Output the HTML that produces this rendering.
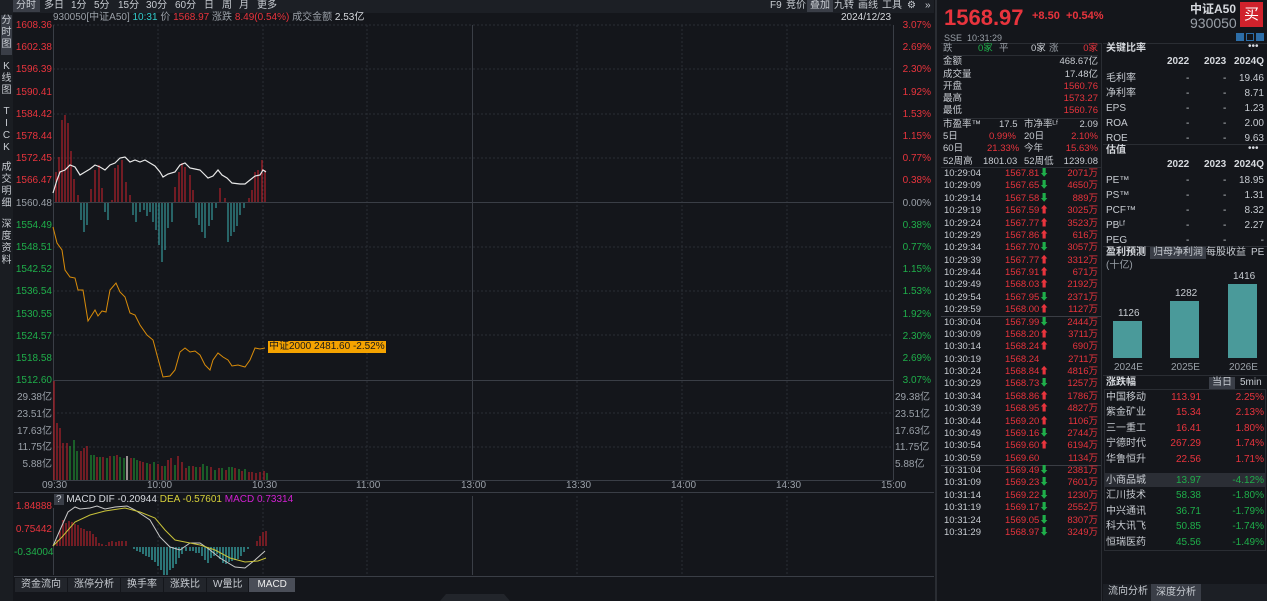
<!DOCTYPE html>
<html><head><meta charset="utf-8"><style>
*{margin:0;padding:0;box-sizing:border-box}
body{width:1267px;height:601px;background:#14161b;color:#c8ccd2;font-family:"Liberation Sans","Noto Sans CJK SC",sans-serif;font-size:10px;position:relative;overflow:hidden}
.a{position:absolute;white-space:nowrap;line-height:12px}
.r{color:#e8343d}.g{color:#1fae4a}.w{color:#d6d9de}.gr{color:#9aa0a8}
.tab{position:absolute;top:0;height:12px;line-height:12px;font-size:10px;color:#c8ccd2;padding:0 3px}
.rt{text-align:right}
</style></head><body>
<!-- top bar -->
<div class="a" style="left:0;top:0;width:934px;height:13px;background:#1c1f25"></div>
<div class="tab" style="left:13px;background:#3a3e47;width:27px">分时</div>
<div class="tab" style="left:41px">多日</div><div class="tab" style="left:68px">1分</div><div class="tab" style="left:91px">5分</div><div class="tab" style="left:115px">15分</div><div class="tab" style="left:143px">30分</div><div class="tab" style="left:172px">60分</div><div class="tab" style="left:201px">日</div><div class="tab" style="left:219px">周</div><div class="tab" style="left:236px">月</div><div class="tab" style="left:254px">更多</div>
<div class="tab" style="left:767px">F9</div><div class="tab" style="left:783px">竞价</div><div class="tab" style="left:807px;background:#3a3e47">叠加</div><div class="tab" style="left:831px">九转</div><div class="tab" style="left:855px">画线</div><div class="tab" style="left:879px">工具</div><div class="tab" style="left:904px">⚙</div><div class="tab" style="left:922px">»</div>
<!-- left sidebar -->
<div class="a" style="left:0;top:13px;width:13px;height:588px;background:#1a1d22"></div>
<div class="a" style="left:1px;top:15px;width:11px;height:40px;background:#3a3e47;line-height:12px;text-align:center;white-space:normal">分<br>时<br>图</div>
<div class="a" style="left:1px;top:61px;width:11px;text-align:center;white-space:normal">K<br>线<br>图</div>
<div class="a" style="left:1px;top:106px;width:11px;text-align:center;white-space:normal">T<br>I<br>C<br>K</div>
<div class="a" style="left:1px;top:162px;width:11px;text-align:center;white-space:normal">成<br>交<br>明<br>细</div>
<div class="a" style="left:1px;top:219px;width:11px;text-align:center;white-space:normal">深<br>度<br>资<br>料</div>
<!-- header line -->
<div class="a" style="left:53px;top:12px;font-size:10px"><span class="gr">930050[中证A50]</span> <span style="color:#3cc">10:31</span> <span class="gr">价</span> <span class="r">1568.97</span> <span class="gr">涨跌</span> <span class="r">8.49(0.54%)</span> <span class="gr">成交金额</span> <span class="w">2.53亿</span></div>
<div class="a w" style="left:841px;top:12px">2024/12/23</div>
<svg class="a" style="left:0;top:0" width="935" height="601">
<g stroke="#2a2e35" stroke-dasharray="2,2" stroke-width="1">
<line x1="53" y1="25" x2="893" y2="25"/><line x1="53" y1="69" x2="893" y2="69"/><line x1="53" y1="114" x2="893" y2="114"/><line x1="53" y1="158" x2="893" y2="158"/><line x1="53" y1="247" x2="893" y2="247"/><line x1="53" y1="291" x2="893" y2="291"/><line x1="53" y1="335" x2="893" y2="335"/>
<line x1="158" y1="25" x2="158" y2="480"/><line x1="263" y1="25" x2="263" y2="480"/><line x1="367" y1="25" x2="367" y2="480"/><line x1="577" y1="25" x2="577" y2="480"/><line x1="682" y1="25" x2="682" y2="480"/><line x1="787" y1="25" x2="787" y2="480"/>
<line x1="53" y1="413" x2="893" y2="413"/><line x1="53" y1="447" x2="893" y2="447"/>
<line x1="158" y1="496" x2="158" y2="575"/><line x1="263" y1="496" x2="263" y2="575"/><line x1="367" y1="496" x2="367" y2="575"/><line x1="577" y1="496" x2="577" y2="575"/><line x1="682" y1="496" x2="682" y2="575"/><line x1="787" y1="496" x2="787" y2="575"/>
</g>
<g stroke="#3a3e46"><line x1="53" y1="202.5" x2="893" y2="202.5"/><line x1="53" y1="380.5" x2="893" y2="380.5"/><line x1="53.5" y1="25" x2="53.5" y2="480"/><line x1="893.5" y1="25" x2="893.5" y2="480"/><line x1="472.5" y1="25" x2="472.5" y2="480"/><line x1="53" y1="480.5" x2="893" y2="480.5"/><line x1="14" y1="492.5" x2="934" y2="492.5"/><line x1="53.5" y1="508" x2="53.5" y2="575"/><line x1="472.5" y1="496" x2="472.5" y2="575"/><line x1="14" y1="576.5" x2="934" y2="576.5"/></g>
<g stroke="#d0222c" stroke-width="1">
<path d="M56 202V172M59 202V157M62 202V120M65 202V115M68 202V123M71 202V151M74 202V179M78 202V195M91 202V189M95 202V170M99 202V165M102 202V188M112 202V200M115 202V168M118 202V165M122 202V160M126 202V182M130 202V195M175 202V187M179 202V172M182 202V163M185 202V167M190 202V175M193 202V190M220 202V188M225 202V198M249 202V198M252 202V190M255 202V172M258 202V170M262 202V160M265 202V170"/>
</g>
<g stroke="#3bb3b3" stroke-width="1">
<path d="M81 203V220M84 203V232M87 203V225M105 203V212M108 203V220M133 203V215M136 203V222M140 203V212M144 203V210M147 203V216M150 203V212M153 203V222M156 203V230M159 203V245M162 203V262M165 203V250M168 203V228M172 203V222M196 203V218M199 203V225M202 203V232M205 203V238M209 203V226M212 203V220M216 203V208M228 203V242M231 203V236M234 203V232M237 203V226M240 203V215M244 203V208"/>
</g>
<polyline fill="none" stroke="#e8e8e8" stroke-width="1.2" points="53,193 57,180 60,172 65,170 70,165 75,167 80,175 85,172 90,169 95,165 100,167 105,170 110,165 115,163 120,158 125,157 130,162 135,160 140,162 145,160 150,163 155,166 160,172 163,177 168,174 175,172 180,165 185,163 190,168 195,169 200,170 205,175 208,178 213,176 218,170 222,175 227,178 232,183 240,184 245,184 250,180 255,176 260,175 263,170 266,172"/>
<polyline fill="none" stroke="#d98c0a" stroke-width="1" points="53,227 57,243 62,250 65,270 70,277 75,278 78,290 83,290 88,321 95,310 98,316 102,311 106,312 110,290 116,283 120,292 125,297 130,313 135,315 140,325 147,335 153,340 157,355 163,377 170,376 175,370 180,352 185,348 190,352 195,351 200,355 205,365 210,370 213,360 218,353 223,357 228,360 232,366 238,365 245,367 250,360 255,348 260,349 265,348"/>
<g stroke-width="1.2">
<path stroke="#b0222a" d="M54 480V381M57 480V423M60 480V428M63 480V443M67 480V443M81 480V451M84 480V448M87 480V446M97 480V457M103 480V457M110 480V456M117 480V455M127 480V456M131 480V458M140 480V461M143 480V462M150 480V464M158 480V464M162 480V466M168 480V460M171 480V458M178 480V456M182 480V462M186 480V468M193 480V466M200 480V467M211 480V467M219 480V468M226 480V470M235 480V468M242 480V471M249 480V472M252 480V472M256 480V473M260 480V472M264 480V471"/>
<path stroke="#1f8e32" d="M70 480V446M74 480V440M77 480V451M91 480V455M94 480V455M100 480V457M107 480V458M114 480V456M120 480V457M124 480V458M134 480V458M137 480V460M147 480V463M154 480V462M165 480V466M175 480V465M189 480V466M196 480V467M203 480V464M207 480V466M215 480V470M222 480V468M229 480V467M232 480V467M239 480V469M245 480V469M267 480V473"/>
<path stroke="#ddd" d="M127 480V456"/>
</g>
<g stroke="#b0222a" stroke-width="1.2"><path d="M57 546V540M60 546V531M63 546V520M66 546V523M69 546V521M72 546V522M75 546V524M78 546V525M81 546V528M84 546V529M87 546V531M90 546V531M93 546V534M96 546V537M99 546V543M102 546V544M106 546V545M109 546V542M112 546V541M116 546V542M119 546V541M122 546V541M126 546V541M257 546V541M260 546V536M263 546V532M266 546V531"/></g>
<g stroke="#3bb3b3" stroke-width="1.2"><path d="M134 547V549M137 547V551M140 547V552M143 547V554M146 547V556M149 547V557M152 547V560M155 547V562M158 547V566M161 547V570M164 547V575M167 547V575M170 547V570M173 547V568M176 547V564M179 547V558M182 547V554M186 547V551M190 547V551M193 547V551M196 547V553M199 547V553M202 547V556M205 547V560M208 547V563M211 547V558M214 547V556M217 547V554M220 547V559M223 547V563M226 547V564M229 547V562M232 547V561M235 547V560M238 547V559M241 547V556M244 547V552M248 547V549"/></g>
<polyline fill="none" stroke="#c8c8c8" stroke-width="1" points="53,546 60,530 68,512 75,507 80,509 90,508 97,506 105,509 115,507 127,506 135,510 150,520 160,537 170,547 180,550 190,543 200,543 210,550 220,558 235,567 245,568 255,560 265,551"/>
<polyline fill="none" stroke="#c8c23a" stroke-width="1" points="53,546 62,537 75,522 90,515 105,511 125,508 140,512 155,518 165,530 175,540 185,542 200,545 215,550 230,558 245,562 258,561 266,558"/>
<path d="M440 601L446 594H504L510 601Z" fill="#22252b"/>
</svg>
<div class="a" style="left:268px;top:341px;background:#f5a300;color:#1a1a1a;padding:0 1px">中证2000 2481.60 -2.52%</div>
<div class="a rt r" style="left:14px;top:15px;width:38px;line-height:22.2px;white-space:normal">1608.36<br>1602.38<br>1596.39<br>1590.41<br>1584.42<br>1578.44<br>1572.45<br>1566.47<br><span class="gr">1560.48</span><br><span class="g">1554.49<br>1548.51<br>1542.52<br>1536.54<br>1530.55<br>1524.57<br>1518.58<br>1512.60</span></div>
<div class="a rt gr" style="left:14px;top:390px;width:38px;line-height:16.8px;white-space:normal">29.38亿<br>23.51亿<br>17.63亿<br>11.75亿<br>5.88亿</div>
<div class="a rt" style="left:895px;top:15px;width:36px;line-height:22.2px;white-space:normal"><span class="r">3.07%<br>2.69%<br>2.30%<br>1.92%<br>1.53%<br>1.15%<br>0.77%<br>0.38%</span><br><span class="gr">0.00%</span><br><span class="g">0.38%<br>0.77%<br>1.15%<br>1.53%<br>1.92%<br>2.30%<br>2.69%<br>3.07%</span></div>
<div class="a gr" style="left:895px;top:390px;line-height:16.8px;white-space:normal">29.38亿<br>23.51亿<br>17.63亿<br>11.75亿<br>5.88亿</div>
<div class="a gr" style="left:42px;top:480px">09:30</div><div class="a gr" style="left:147px;top:480px">10:00</div><div class="a gr" style="left:252px;top:480px">10:30</div><div class="a gr" style="left:356px;top:480px">11:00</div><div class="a gr" style="left:461px;top:480px">13:00</div><div class="a gr" style="left:566px;top:480px">13:30</div><div class="a gr" style="left:671px;top:480px">14:00</div><div class="a gr" style="left:776px;top:480px">14:30</div><div class="a gr" style="left:881px;top:480px">15:00</div>
<div class="a" style="left:54px;top:494px"><span style="background:#3a3e47;padding:0 2px">?</span> <span class="w">MACD DIF -0.20944</span> <span style="color:#d6d03a">DEA -0.57601</span> <span style="color:#d020d0">MACD 0.73314</span></div>
<div class="a rt r" style="left:14px;top:501px;width:38px">1.84888</div>
<div class="a rt r" style="left:14px;top:524px;width:38px">0.75442</div>
<div class="a rt g" style="left:14px;top:547px;width:38px">-0.34004</div>
<div class="a" style="left:15px;top:578px;line-height:14px;font-size:10px">
<span style="display:inline-block;background:#22252b;padding:0 6px;margin-right:1px">资金流向</span><span style="display:inline-block;background:#22252b;padding:0 6px;margin-right:1px">涨停分析</span><span style="display:inline-block;background:#22252b;padding:0 6px;margin-right:1px">换手率</span><span style="display:inline-block;background:#22252b;padding:0 6px;margin-right:1px">涨跌比</span><span style="display:inline-block;background:#22252b;padding:0 6px;margin-right:1px">W量比</span><span style="display:inline-block;background:#4a4e58;padding:0 8px;color:#eee">MACD</span></div>
<div class="a" style="left:935px;top:0;width:2px;height:601px;background:#2a2d33"></div>
<div class="a r" style="left:944px;top:5px;font-size:22px;line-height:26px;font-weight:bold">1568.97</div>
<div class="a r" style="left:1032px;top:10px;font-size:11px;font-weight:bold">+8.50 &nbsp;+0.54%</div>
<div class="a w" style="left:1190px;top:2px;font-size:12px;font-weight:bold;line-height:14px">中证A50</div>
<div class="a gr" style="left:1190px;top:15px;font-size:14px;line-height:16px">930050</div>
<div class="a" style="left:1240px;top:2px;width:23px;height:25px;background:#d0222c;color:#fff;font-size:15px;line-height:25px;text-align:center">买</div>
<div class="a gr" style="left:944px;top:32px;font-size:9px">SSE &nbsp;10:31:29</div>
<div class="a" style="left:1236px;top:33px;width:8px;height:8px;background:#2d6ea8"></div><div class="a" style="left:1246px;top:33px;width:8px;height:8px;border:1px solid #2d6ea8"></div><div class="a" style="left:1256px;top:33px;width:8px;height:8px;background:#2d6ea8"></div>
<div class="a" style="left:941px;top:43px;width:160px;height:1px;background:#2a2d33"></div>
<div class="a" style="left:1103px;top:43px;width:164px;height:1px;background:#2a2d33"></div>
<div class="a" style="left:1101px;top:43px;width:1px;height:558px;background:#2a2d33"></div>
<div class="a" style="left:943px;top:43px;width:155px;font-size:9.5px;line-height:12.3px">
<div><span class="gr">跌</span><span class="g" style="position:absolute;left:35px">0家</span><span class="gr" style="position:absolute;left:56px">平</span><span style="position:absolute;left:88px">0家</span><span class="gr" style="position:absolute;left:106px">涨</span><span class="r" style="position:absolute;right:0">0家</span></div>
<div style="border-top:1px solid #2a2d33">金额<span style="float:right">468.67亿</span></div>
<div>成交量<span style="float:right">17.48亿</span></div>
<div>开盘<span class="r" style="float:right">1560.76</span></div>
<div>最高<span class="r" style="float:right">1573.27</span></div>
<div>最低<span class="r" style="float:right">1560.76</span></div>
<div style="border-top:1px solid #2a2d33;position:relative">市盈率™<span style="position:absolute;left:56px">17.5</span><span style="position:absolute;left:81px">市净率ᴸᶠ</span><span style="float:right">2.09</span></div>
<div style="position:relative">5日<span class="r" style="position:absolute;left:46px">0.99%</span><span style="position:absolute;left:81px">20日</span><span class="r" style="float:right">2.10%</span></div>
<div style="position:relative">60日<span class="r" style="position:absolute;left:44px">21.33%</span><span style="position:absolute;left:81px">今年</span><span class="r" style="float:right">15.63%</span></div>
<div style="position:relative">52周高<span style="position:absolute;left:40px">1801.03</span><span style="position:absolute;left:81px">52周低</span><span style="float:right">1239.08</span></div>
</div>
<div class="a" style="left:941px;top:167px;width:160px;height:1px;background:#2a2d33"></div>
<div class="a" style="left:941px;top:316px;width:160px;height:1px;background:#3a3d44"></div>
<div class="a" style="left:941px;top:465px;width:160px;height:1px;background:#3a3d44"></div>
<div class="a" style="left:944px;top:168px;width:154px;font-size:9.5px;line-height:12.38px;white-space:normal">
<div>10:29:04<span class="r" style="position:absolute;left:61px">1567.81<span class="g">⬇</span></span><span class="r" style="float:right">2071万</span></div>
<div>10:29:09<span class="r" style="position:absolute;left:61px">1567.65<span class="g">⬇</span></span><span class="r" style="float:right">4650万</span></div>
<div>10:29:14<span class="r" style="position:absolute;left:61px">1567.58<span class="g">⬇</span></span><span class="r" style="float:right">889万</span></div>
<div>10:29:19<span class="r" style="position:absolute;left:61px">1567.59⬆</span><span class="r" style="float:right">3025万</span></div>
<div>10:29:24<span class="r" style="position:absolute;left:61px">1567.77⬆</span><span class="r" style="float:right">3523万</span></div>
<div>10:29:29<span class="r" style="position:absolute;left:61px">1567.86⬆</span><span class="r" style="float:right">616万</span></div>
<div>10:29:34<span class="r" style="position:absolute;left:61px">1567.70<span class="g">⬇</span></span><span class="r" style="float:right">3057万</span></div>
<div>10:29:39<span class="r" style="position:absolute;left:61px">1567.77⬆</span><span class="r" style="float:right">3312万</span></div>
<div>10:29:44<span class="r" style="position:absolute;left:61px">1567.91⬆</span><span class="r" style="float:right">671万</span></div>
<div>10:29:49<span class="r" style="position:absolute;left:61px">1568.03⬆</span><span class="r" style="float:right">2192万</span></div>
<div>10:29:54<span class="r" style="position:absolute;left:61px">1567.95<span class="g">⬇</span></span><span class="r" style="float:right">2371万</span></div>
<div>10:29:59<span class="r" style="position:absolute;left:61px">1568.00⬆</span><span class="r" style="float:right">1127万</span></div>
<div>10:30:04<span class="r" style="position:absolute;left:61px">1567.99<span class="g">⬇</span></span><span class="r" style="float:right">2444万</span></div>
<div>10:30:09<span class="r" style="position:absolute;left:61px">1568.20⬆</span><span class="r" style="float:right">3711万</span></div>
<div>10:30:14<span class="r" style="position:absolute;left:61px">1568.24⬆</span><span class="r" style="float:right">690万</span></div>
<div>10:30:19<span class="r" style="position:absolute;left:61px">1568.24</span><span class="r" style="float:right">2711万</span></div>
<div>10:30:24<span class="r" style="position:absolute;left:61px">1568.84⬆</span><span class="r" style="float:right">4816万</span></div>
<div>10:30:29<span class="r" style="position:absolute;left:61px">1568.73<span class="g">⬇</span></span><span class="r" style="float:right">1257万</span></div>
<div>10:30:34<span class="r" style="position:absolute;left:61px">1568.86⬆</span><span class="r" style="float:right">1786万</span></div>
<div>10:30:39<span class="r" style="position:absolute;left:61px">1568.95⬆</span><span class="r" style="float:right">4827万</span></div>
<div>10:30:44<span class="r" style="position:absolute;left:61px">1569.20⬆</span><span class="r" style="float:right">1106万</span></div>
<div>10:30:49<span class="r" style="position:absolute;left:61px">1569.16<span class="g">⬇</span></span><span class="r" style="float:right">2744万</span></div>
<div>10:30:54<span class="r" style="position:absolute;left:61px">1569.60⬆</span><span class="r" style="float:right">6194万</span></div>
<div>10:30:59<span class="r" style="position:absolute;left:61px">1569.60</span><span class="r" style="float:right">1134万</span></div>
<div>10:31:04<span class="r" style="position:absolute;left:61px">1569.49<span class="g">⬇</span></span><span class="r" style="float:right">2381万</span></div>
<div>10:31:09<span class="r" style="position:absolute;left:61px">1569.23<span class="g">⬇</span></span><span class="r" style="float:right">7601万</span></div>
<div>10:31:14<span class="r" style="position:absolute;left:61px">1569.22<span class="g">⬇</span></span><span class="r" style="float:right">1230万</span></div>
<div>10:31:19<span class="r" style="position:absolute;left:61px">1569.17<span class="g">⬇</span></span><span class="r" style="float:right">2552万</span></div>
<div>10:31:24<span class="r" style="position:absolute;left:61px">1569.05<span class="g">⬇</span></span><span class="r" style="float:right">8307万</span></div>
<div>10:31:29<span class="r" style="position:absolute;left:61px">1568.97<span class="g">⬇</span></span><span class="r" style="float:right">3249万</span></div>
</div>
<div class="a w" style="left:1106px;top:43px;font-weight:bold">关键比率</div><div class="a w" style="left:1248px;top:41px">•••</div>
<div class="a w" style="left:1106px;top:56px;width:158px;font-weight:bold"><span style="position:absolute;left:61px">2022</span><span style="position:absolute;left:98px">2023</span><span style="position:absolute;right:0">2024Q</span></div>
<div class="a" style="left:1106px;top:71px;width:158px;line-height:15px;white-space:normal">
<div>毛利率<span style="position:absolute;left:80px">-</span><span style="position:absolute;left:117px">-</span><span style="float:right">19.46</span></div>
<div>净利率<span style="position:absolute;left:80px">-</span><span style="position:absolute;left:117px">-</span><span style="float:right">8.71</span></div>
<div>EPS<span style="position:absolute;left:80px">-</span><span style="position:absolute;left:117px">-</span><span style="float:right">1.23</span></div>
<div>ROA<span style="position:absolute;left:80px">-</span><span style="position:absolute;left:117px">-</span><span style="float:right">2.00</span></div>
<div>ROE<span style="position:absolute;left:80px">-</span><span style="position:absolute;left:117px">-</span><span style="float:right">9.63</span></div></div>
<div class="a" style="left:1103px;top:144px;width:164px;height:1px;background:#2a2d33"></div>
<div class="a w" style="left:1106px;top:145px;font-weight:bold">估值</div><div class="a w" style="left:1248px;top:143px">•••</div>
<div class="a w" style="left:1106px;top:159px;width:158px;font-weight:bold"><span style="position:absolute;left:61px">2022</span><span style="position:absolute;left:98px">2023</span><span style="position:absolute;right:0">2024Q</span></div>
<div class="a" style="left:1106px;top:173px;width:158px;line-height:15px;white-space:normal">
<div>PE™<span style="position:absolute;left:80px">-</span><span style="position:absolute;left:117px">-</span><span style="float:right">18.95</span></div>
<div>PS™<span style="position:absolute;left:80px">-</span><span style="position:absolute;left:117px">-</span><span style="float:right">1.31</span></div>
<div>PCF™<span style="position:absolute;left:80px">-</span><span style="position:absolute;left:117px">-</span><span style="float:right">8.32</span></div>
<div>PBᴸᶠ<span style="position:absolute;left:80px">-</span><span style="position:absolute;left:117px">-</span><span style="float:right">2.27</span></div>
<div>PEG<span style="position:absolute;left:80px">-</span><span style="position:absolute;left:117px">-</span><span style="float:right">-</span></div></div>
<div class="a" style="left:1103px;top:246px;width:164px;height:1px;background:#2a2d33"></div>
<div class="a w" style="left:1106px;top:247px;font-weight:bold">盈利预测</div>
<div class="a" style="left:1150px;top:247px;background:#3a3e47;padding:0 3px">归母净利润</div>
<div class="a" style="left:1206px;top:247px">每股收益</div><div class="a" style="left:1251px;top:247px">PE</div>
<div class="a gr" style="left:1106px;top:260px">(十亿)</div>
<div class="a" style="left:1113px;top:321px;width:29px;height:37px;background:#4a9a9a"></div>
<div class="a" style="left:1170px;top:301px;width:29px;height:57px;background:#4a9a9a"></div>
<div class="a" style="left:1228px;top:284px;width:29px;height:74px;background:#4a9a9a"></div>
<div class="a" style="left:1118px;top:308px">1126</div><div class="a" style="left:1175px;top:288px">1282</div><div class="a" style="left:1233px;top:271px">1416</div>
<div class="a gr" style="left:1114px;top:362px">2024E</div><div class="a gr" style="left:1171px;top:362px">2025E</div><div class="a gr" style="left:1229px;top:362px">2026E</div>
<div class="a" style="left:1103px;top:375px;width:164px;height:1px;background:#2a2d33"></div>
<div class="a w" style="left:1106px;top:377px;font-weight:bold">涨跌幅</div>
<div class="a" style="left:1209px;top:377px;background:#3a3e47;padding:0 3px">当日</div><div class="a" style="left:1240px;top:377px">5min</div>
<div class="a" style="left:1104px;top:389px;width:162px;height:162px;border:1px solid #2a2d33"></div>
<div class="a" style="left:1104px;top:473px;width:162px;height:14px;background:#2b2e35"></div>
<div class="a" style="left:1106px;top:390px;width:158px;line-height:15.4px;white-space:normal">
<div>中国移动<span class="r" style="position:absolute;left:62px;width:33px;text-align:right">113.91</span><span class="r" style="float:right">2.25%</span></div>
<div>紫金矿业<span class="r" style="position:absolute;left:62px;width:33px;text-align:right">15.34</span><span class="r" style="float:right">2.13%</span></div>
<div>三一重工<span class="r" style="position:absolute;left:62px;width:33px;text-align:right">16.41</span><span class="r" style="float:right">1.80%</span></div>
<div>宁德时代<span class="r" style="position:absolute;left:62px;width:33px;text-align:right">267.29</span><span class="r" style="float:right">1.74%</span></div>
<div>华鲁恒升<span class="r" style="position:absolute;left:62px;width:33px;text-align:right">22.56</span><span class="r" style="float:right">1.71%</span></div>
<div style="height:6px"></div>
<div>小商品城<span class="g" style="position:absolute;left:62px;width:33px;text-align:right">13.97</span><span class="g" style="float:right">-4.12%</span></div>
<div>汇川技术<span class="g" style="position:absolute;left:62px;width:33px;text-align:right">58.38</span><span class="g" style="float:right">-1.80%</span></div>
<div>中兴通讯<span class="g" style="position:absolute;left:62px;width:33px;text-align:right">36.71</span><span class="g" style="float:right">-1.79%</span></div>
<div>科大讯飞<span class="g" style="position:absolute;left:62px;width:33px;text-align:right">50.85</span><span class="g" style="float:right">-1.74%</span></div>
<div>恒瑞医药<span class="g" style="position:absolute;left:62px;width:33px;text-align:right">45.56</span><span class="g" style="float:right">-1.49%</span></div></div>
<div class="a" style="left:1103px;top:584px;width:164px;height:17px;background:#1c1f25"></div>
<div class="a" style="left:1105px;top:586px;padding:0 3px">流向分析</div>
<div class="a" style="left:1151px;top:584px;height:17px;line-height:17px;background:#3a3e47;padding:0 5px">深度分析</div>
</body></html>
